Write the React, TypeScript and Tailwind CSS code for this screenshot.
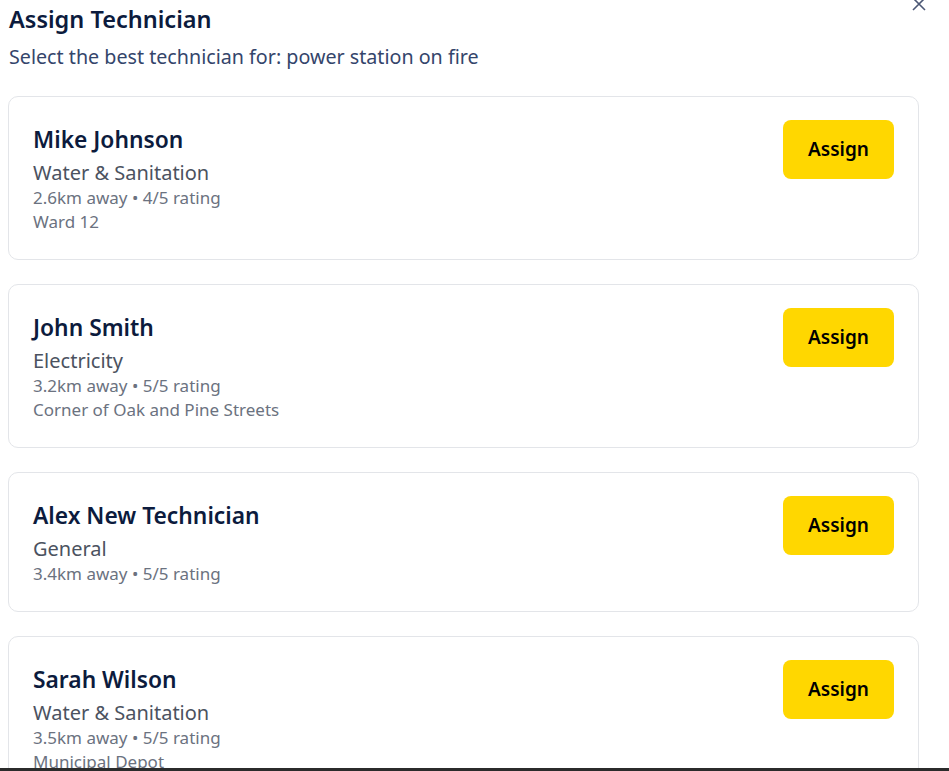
import React from "react";

type Tech = { name: string; cat: string; dist: string; rating: string; loc?: string };

const techs: Tech[] = [
  { name: "Mike Johnson", cat: "Water & Sanitation", dist: "2.6km away", rating: "4/5 rating", loc: "Ward 12" },
  { name: "John Smith", cat: "Electricity", dist: "3.2km away", rating: "5/5 rating", loc: "Corner of Oak and Pine Streets" },
  { name: "Alex New Technician", cat: "General", dist: "3.4km away", rating: "5/5 rating" },
  { name: "Sarah Wilson", cat: "Water & Sanitation", dist: "3.5km away", rating: "5/5 rating", loc: "Municipal Depot" },
];

export default function App() {
  return (
    <div
      className="h-[771px] w-[949px] flex flex-col bg-white overflow-hidden"
      style={{ fontFamily: '"Noto Sans", "Open Sans", sans-serif' }}
    >
      <div className="relative flex-1 overflow-hidden px-2">
        <button className="absolute right-[22px] top-[-4px] text-[#4b5775]" aria-label="Close">
          <svg width="16" height="16" viewBox="0 0 16 16" fill="none" stroke="currentColor" strokeWidth="1.6">
            <path d="M2 2 L14 14 M14 2 L2 14" />
          </svg>
        </button>
        <h2 className="mt-[3px] text-[23.5px] leading-[32px] font-semibold text-[#0c1b3d] pl-px">Assign Technician</h2>
        <p className="mt-[9px] text-[19.7px] leading-[26px] text-[#34456b] pl-px">
          Select the best technician for: power station on fire
        </p>
        <div className="mt-[26px] flex flex-col gap-[24px] w-[911px]">
          {techs.map((t) => (
            <div
              key={t.name}
              className="flex items-start justify-between rounded-[10px] border border-[#e3e5e9] px-[24px] pt-[23px] pb-[25px]"
            >
              <div className="flex flex-col">
                <div className="text-[22.8px] leading-[32px] font-semibold text-[#0c1b3d] mt-[4px]">{t.name}</div>
                <div className="text-[20px] leading-[28px] text-[#4b5260] mt-[3px]">{t.cat}</div>
                <div className="text-[17px] leading-[24px] text-[#6b7280] -mt-px">
                  {t.dist} • {t.rating}
                </div>
                {t.loc && <div className="text-[17px] leading-[24px] text-[#6b7280]">{t.loc}</div>}
              </div>
              <button className="h-[59px] w-[111px] rounded-[8px] bg-[#ffd700] text-[19px] font-semibold text-black">
                Assign
              </button>
            </div>
          ))}
        </div>
      </div>
      <div className="h-[3px] bg-[#2b2b2b]" />
    </div>
  );
}
